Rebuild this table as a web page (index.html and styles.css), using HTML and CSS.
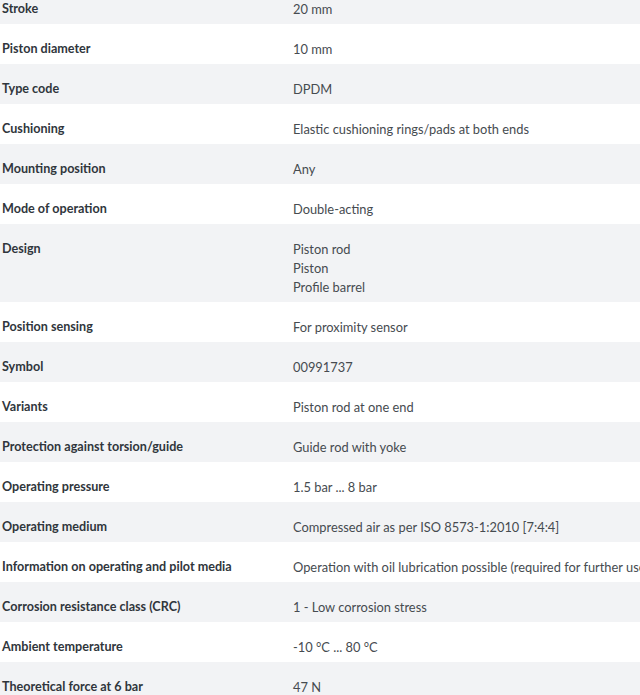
FILE: index.html
```html
<!DOCTYPE html>
<html>
<head>
<meta charset="utf-8">
<link rel="stylesheet" href="styles.css">
</head>
<body>
<div class="specs">
  <div class="row"><div class="label">Stroke</div><div class="value">20 mm</div></div>
  <div class="row"><div class="label">Piston diameter</div><div class="value">10 mm</div></div>
  <div class="row"><div class="label">Type code</div><div class="value">DPDM</div></div>
  <div class="row"><div class="label">Cushioning</div><div class="value">Elastic cushioning rings/pads at both ends</div></div>
  <div class="row"><div class="label">Mounting position</div><div class="value">Any</div></div>
  <div class="row"><div class="label">Mode of operation</div><div class="value">Double-acting</div></div>
  <div class="row"><div class="label">Design</div><div class="value multi"><div>Piston rod</div><div>Piston</div><div>Profile barrel</div></div></div>
  <div class="row"><div class="label">Position sensing</div><div class="value">For proximity sensor</div></div>
  <div class="row"><div class="label">Symbol</div><div class="value">00991737</div></div>
  <div class="row"><div class="label">Variants</div><div class="value">Piston rod at one end</div></div>
  <div class="row"><div class="label">Protection against torsion/guide</div><div class="value">Guide rod with yoke</div></div>
  <div class="row"><div class="label">Operating pressure</div><div class="value">1.5 bar ... 8 bar</div></div>
  <div class="row"><div class="label">Operating medium</div><div class="value">Compressed air as per ISO 8573-1:2010 [7:4:4]</div></div>
  <div class="row"><div class="label">Information on operating and pilot media</div><div class="value">Operation with oil lubrication possible (required for further use)</div></div>
  <div class="row"><div class="label">Corrosion resistance class (CRC)</div><div class="value">1 - Low corrosion stress</div></div>
  <div class="row"><div class="label">Ambient temperature</div><div class="value">-10 °C ... 80 °C</div></div>
  <div class="row"><div class="label">Theoretical force at 6 bar</div><div class="value">47 N</div></div>
</div>
</body>
</html>
```
FILE: styles.css
```css
html, body {
  margin: 0;
  padding: 0;
  background: #ffffff;
  overflow: hidden;
}
body {
  font-family: Lato, "Liberation Sans", sans-serif;
  font-size: 12.6px;
  color: #333333;
}
.specs {
  margin-top: -16px;
  display: flex;
  flex-direction: column;
}
.row {
  display: grid;
  grid-template-columns: 291px 1fr;
  padding: 15px 0 5px 2px;
  line-height: 20px;
  white-space: nowrap;
}
.row:nth-child(odd) {
  background: #f2f3f5;
}
.label {
  font-weight: 700;
  color: #30363c;
}
.value {
  font-size: 12.85px;
  color: #464b50;
}
.value.multi {
  line-height: 19px;
}
.value.multi div:first-child {
  line-height: 20px;
}
```
